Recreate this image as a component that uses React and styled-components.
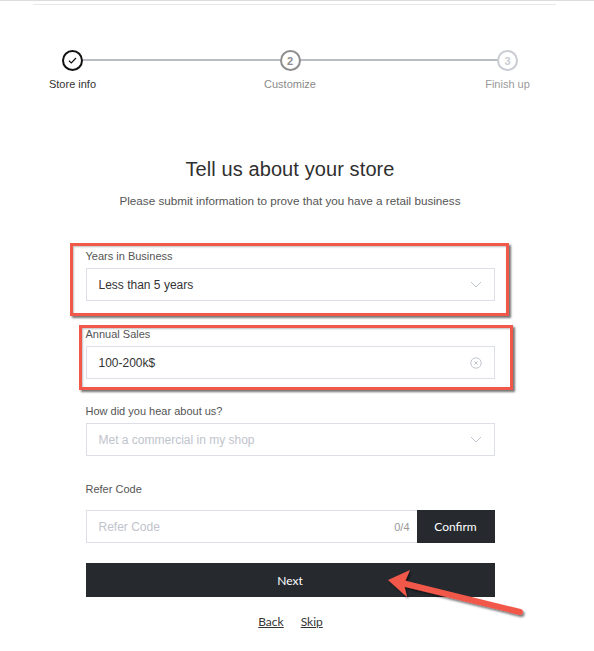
import React from "react";
import styled, { createGlobalStyle } from "styled-components";

const GlobalStyle = createGlobalStyle`
  html, body {
    margin: 0;
    padding: 0;
    background: #ffffff;
    font-family: "Liberation Sans", Arial, sans-serif;
    color: #333;
  }
  * { box-sizing: border-box; }
`;

const Page = styled.div`
  position: relative;
  width: 594px;
  height: 651px;
  border-top: 1px solid #dcdcdc;
  overflow: hidden;
`;

const TopRule = styled.div`
  margin: 3px 38px 0 33px;
  height: 1px;
  background: #e8e8e8;
`;

const Column = styled.div`
  width: 580px;
  display: flex;
  flex-direction: column;
  align-items: center;
`;

const Stepper = styled.div`
  display: flex;
  width: 515px;
  margin-top: 45px;
`;

const Step = styled.div`
  position: relative;
  z-index: 1;
  width: 80px;
  display: flex;
  flex-direction: column;
  align-items: center;
`;

const Circle = styled.div`
  width: 21px;
  height: 21px;
  border-radius: 50%;
  border: 2px solid ${p => p.$color};
  background: #fff;
  color: ${p => p.$color};
  display: flex;
  align-items: center;
  justify-content: center;
  font-size: 11px;
  font-weight: 700;
`;

const StepLabel = styled.div`
  margin-top: 7px;
  font-size: 11px;
  color: ${p => p.$color};
  white-space: nowrap;
`;

const Connector = styled.div`
  flex: 1;
  height: 2px;
  margin: 9px -30px 0;
  background: #babdc3;
`;

const Title = styled.h1`
  margin: 68px 0 0;
  font-size: 20px;
  font-weight: 400;
  color: #2f2f2f;
  letter-spacing: 0.1px;
`;

const Subtitle = styled.p`
  margin: 13px 0 0;
  font-size: 11.7px;
  color: #555;
`;

const Form = styled.div`
  width: 409px;
  margin-top: 43px;
  display: flex;
  flex-direction: column;
`;

const Field = styled.div`
  position: relative;
  display: flex;
  flex-direction: column;
  margin-bottom: ${p => p.$after}px;
`;

const Label = styled.div`
  font-size: 11px;
  line-height: 12px;
  color: #555;
  margin-bottom: ${p => p.$gap || 6}px;
`;

const Box = styled.div`
  height: 33px;
  border: 1px solid #dcdfe6;
  display: flex;
  align-items: center;
  padding-left: 12px;
  padding-right: ${p => (p.$flush ? 0 : 12)}px;
  font-size: 12px;
  color: ${p => (p.$placeholder ? "#c0c4cc" : "#333")};
  background: #fff;
`;

const BoxText = styled.span`
  flex: 1;
`;

const Counter = styled.span`
  font-size: 11px;
  color: #999;
  margin-right: 7px;
`;

const DarkButton = styled.div`
  background: #262a2f;
  color: #fff;
  font-size: 12px;
  display: flex;
  align-items: center;
  justify-content: center;
  width: ${p => p.$width || "auto"};
  height: ${p => p.$height || "100%"};
  font-family: Lato, "Liberation Sans", sans-serif;
`;

const ConfirmButton = styled(DarkButton)`
  margin: -1px -1px -1px 0;
  height: 33px;
`;

const Links = styled.div`
  display: flex;
  justify-content: center;
  gap: 17px;
  margin-top: 17px;
  padding-left: 1px;
`;

const LinkText = styled.a`
  font-family: Lato, "Liberation Sans", sans-serif;
  font-size: 12px;
  color: #333;
  text-decoration: underline;
`;

const Highlight = styled.div`
  position: absolute;
  top: ${p => p.$t}px;
  left: ${p => p.$l}px;
  right: ${p => p.$r}px;
  bottom: ${p => p.$b}px;
  border: 3px solid #f1584a;
  box-shadow: 2px 2px 2px rgba(0, 0, 0, 0.55), inset 1px 1px 2px rgba(0, 0, 0, 0.25);
  pointer-events: none;
`;

const ArrowSvg = styled.svg`
  position: absolute;
  left: 380px;
  top: 567px;
  overflow: visible;
`;

const Chevron = () => (
  <svg width="12" height="7" viewBox="0 0 12 7">
    <path d="M1 1l5 5 5-5" fill="none" stroke="#c0c4cc" strokeWidth="1" />
  </svg>
);

const ClearIcon = () => (
  <svg width="12" height="12" viewBox="0 0 12 12">
    <circle cx="6" cy="6" r="5.2" fill="none" stroke="#c0c4cc" strokeWidth="1" />
    <path d="M4.3 4.3l3.4 3.4M7.7 4.3l-3.4 3.4" stroke="#c0c4cc" strokeWidth="1" />
  </svg>
);

const Check = () => (
  <svg width="11" height="9" viewBox="0 0 11 9">
    <path d="M2 4.8l2.3 2.2L9 2" fill="none" stroke="#111" strokeWidth="1.2" />
  </svg>
);

const steps = [
  { label: "Store info", color: "#111", labelColor: "#333", content: <Check /> },
  { label: "Customize", color: "#8d8d8d", labelColor: "#8a8a8a", content: "2" },
  { label: "Finish up", color: "#c9ccd2", labelColor: "#9a9a9a", content: "3" }
];

export default function App() {
  return (
    <>
      <GlobalStyle />
      <Page>
        <TopRule />
        <Column>
          <Stepper>
            {steps.map((s, i) => (
              <React.Fragment key={s.label}>
                {i > 0 && <Connector />}
                <Step>
                  <Circle $color={s.color}>{s.content}</Circle>
                  <StepLabel $color={s.labelColor}>{s.label}</StepLabel>
                </Step>
              </React.Fragment>
            ))}
          </Stepper>

          <Title>Tell us about your store</Title>
          <Subtitle>Please submit information to prove that you have a retail business</Subtitle>

          <Form>
            <Field $after={27}>
              <Label>Years in Business</Label>
              <Box>
                <BoxText>Less than 5 years</BoxText>
                <Chevron />
              </Box>
              <Highlight $t={-7} $l={-16} $r={-14} $b={-15} />
            </Field>

            <Field $after={26}>
              <Label>Annual Sales</Label>
              <Box>
                <BoxText>100-200k$</BoxText>
                <ClearIcon />
              </Box>
              <Highlight $t={-3} $l={-7} $r={-18} $b={-11} />
            </Field>

            <Field $after={27}>
              <Label>How did you hear about us?</Label>
              <Box $placeholder>
                <BoxText>Met a commercial in my shop</BoxText>
                <Chevron />
              </Box>
            </Field>

            <Field $after={20}>
              <Label $gap={15}>Refer Code</Label>
              <Box $placeholder $flush>
                <BoxText>Refer Code</BoxText>
                <Counter>0/4</Counter>
                <ConfirmButton $width="78px">Confirm</ConfirmButton>
              </Box>
            </Field>

            <DarkButton $height="34px">Next</DarkButton>
          </Form>

          <Links>
            <LinkText>Back</LinkText>
            <LinkText>Skip</LinkText>
          </Links>
        </Column>

        <ArrowSvg width="150" height="60" viewBox="0 0 150 60">
          <defs>
            <filter id="sh" x="-20%" y="-50%" width="140%" height="200%">
              <feDropShadow dx="1.5" dy="2" stdDeviation="1.2" floodColor="#000" floodOpacity="0.55" />
            </filter>
          </defs>
          <g filter="url(#sh)">
            <path d="M140 44 L22 15" stroke="#f1584a" strokeWidth="6" strokeLinecap="round" />
            <path d="M8 12 L30 2 L24 16 L27 29 Z" fill="#f1584a" />
          </g>
        </ArrowSvg>
      </Page>
    </>
  );
}
